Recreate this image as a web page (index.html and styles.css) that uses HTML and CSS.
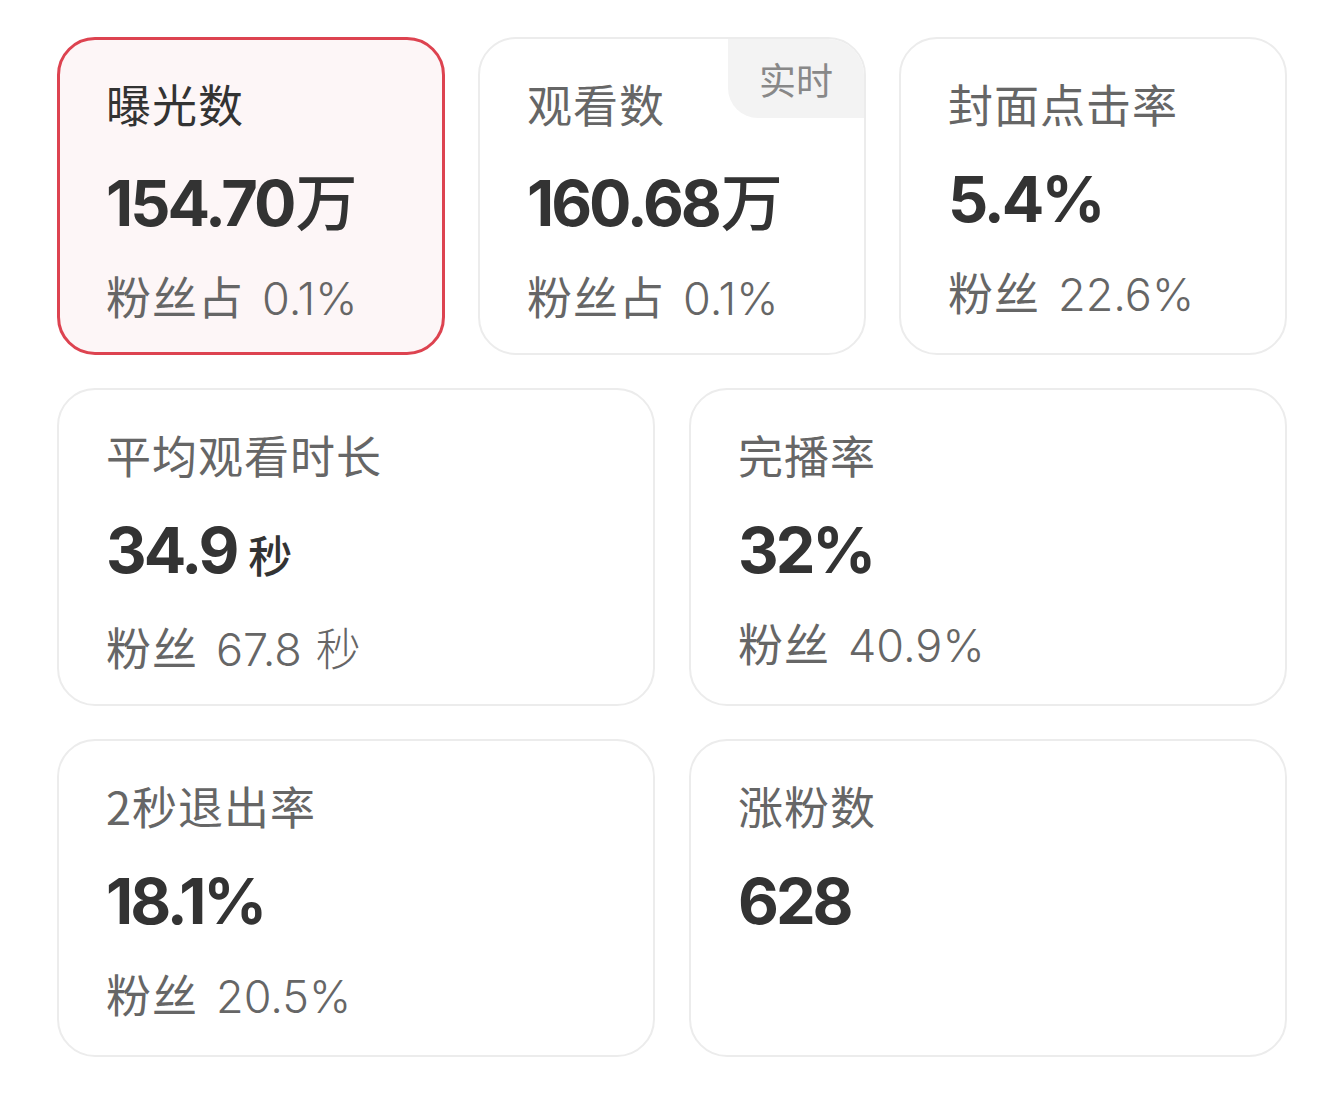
FILE: index.html
```html
<!DOCTYPE html>
<html lang="zh-CN">
<head>
<meta charset="utf-8">
<title>数据概览</title>
<link rel="stylesheet" href="styles.css">
</head>
<body>
<main class="board">
  <section class="row row-3">
    <div class="card active">
      <div class="title strong">曝光数</div>
      <div class="value">154.70<span class="unit">万</span></div>
      <div class="sub">粉丝占<span class="num">0.1%</span></div>
    </div>
    <div class="card">
      <span class="badge">实时</span>
      <div class="title">观看数</div>
      <div class="value">160.68<span class="unit">万</span></div>
      <div class="sub">粉丝占<span class="num">0.1%</span></div>
    </div>
    <div class="card">
      <div class="title">封面点击率</div>
      <div class="value">5.4%</div>
      <div class="sub">粉丝<span class="num">22.6%</span></div>
    </div>
  </section>
  <section class="row row-2">
    <div class="card">
      <div class="title">平均观看时长</div>
      <div class="value">34.9<span class="unit sec">秒</span></div>
      <div class="sub">粉丝<span class="num">67.8</span><span class="num tail">秒</span></div>
    </div>
    <div class="card">
      <div class="title">完播率</div>
      <div class="value">32%</div>
      <div class="sub">粉丝<span class="num">40.9%</span></div>
    </div>
  </section>
  <section class="row row-2">
    <div class="card">
      <div class="title">2秒退出率</div>
      <div class="value">18.1%</div>
      <div class="sub">粉丝<span class="num">20.5%</span></div>
    </div>
    <div class="card">
      <div class="title">涨粉数</div>
      <div class="value">628</div>
    </div>
  </section>
</main>
</body>
</html>
```
FILE: styles.css
```css
html, body {
  margin: 0;
  padding: 0;
  background: #ffffff;
}
body {
  font-family: Inter, "Noto Sans CJK SC", "Noto Sans", sans-serif;
  color: #333;
}
.board {
  padding: 37px 57px 0 57px;
  display: flex;
  flex-direction: column;
  gap: 33px;
}
.row {
  display: grid;
  gap: 33px;
}
.row-3 { grid-template-columns: repeat(3, 1fr); }
.row-2 { grid-template-columns: repeat(2, 1fr); gap: 34px; }
.card {
  position: relative;
  overflow: hidden;
  box-sizing: border-box;
  height: 318px;
  border: 2px solid #ececec;
  border-radius: 38px;
  background: #fff;
  padding: 34px 48px 0 47px;
}
.card.active {
  border: 3px solid #dd4350;
  background: #fdf6f7;
  padding: 33px 47px 0 46px;
}
.title {
  font-family: "Noto Sans CJK SC", sans-serif;
  font-size: 45px;
  line-height: 62px;
  color: #666;
  letter-spacing: 1px;
}
.title.strong { color: #333; }
.value {
  margin-top: 24px;
  font-size: 63px;
  line-height: 80px;
  font-weight: 700;
  color: #333;
  letter-spacing: -3px;
}
.unit {
  font-family: "Noto Sans CJK SC", sans-serif;
  font-weight: 500;
  font-size: 62px;
  letter-spacing: 0;
  margin-left: 2px;
}
.unit.sec {
  font-size: 44px;
  margin-left: 12px;
}
.sub {
  margin-top: 22px;
  font-family: "Noto Sans CJK SC", sans-serif;
  font-size: 45px;
  line-height: 62px;
  color: #666;
  letter-spacing: 1px;
}
.num {
  font-family: Inter, "Noto Sans CJK SC", sans-serif;
  font-weight: 300;
  margin-left: 18px;
  letter-spacing: 0;
}
.num.tail {
  margin-left: 14px;
}
.badge {
  position: absolute;
  top: 0;
  right: 0;
  width: 136px;
  height: 79px;
  background: #f3f3f3;
  border-bottom-left-radius: 30px;
  font-family: "Noto Sans CJK SC", sans-serif;
  font-size: 37px;
  color: #888;
  display: flex;
  align-items: center;
  justify-content: center;
}
```
